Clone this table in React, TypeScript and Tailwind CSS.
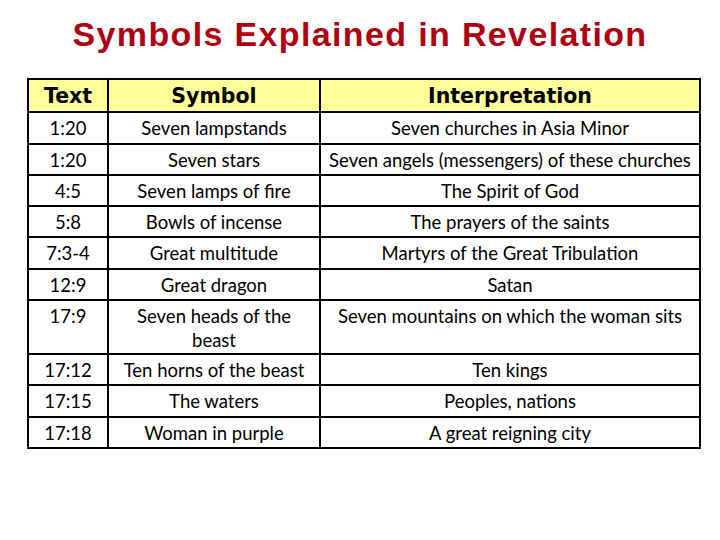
const rows: { ref: string; symbol: string; meaning: string; tall?: boolean; h: string }[] = [
  { ref: '1:20', symbol: 'Seven lampstands', meaning: 'Seven churches in Asia Minor', h: 'h-[32px]' },
  { ref: '1:20', symbol: 'Seven stars', meaning: 'Seven angels (messengers) of these churches', h: 'h-[31px]' },
  { ref: '4:5', symbol: 'Seven lamps of fire', meaning: 'The Spirit of God', h: 'h-[31px]' },
  { ref: '5:8', symbol: 'Bowls of incense', meaning: 'The prayers of the saints', h: 'h-[31px]' },
  { ref: '7:3-4', symbol: 'Great multitude', meaning: 'Martyrs of the Great Tribulation', h: 'h-[32px]' },
  { ref: '12:9', symbol: 'Great dragon', meaning: 'Satan', h: 'h-[31px]' },
  { ref: '17:9', symbol: 'Seven heads of the beast', meaning: 'Seven mountains on which the woman sits', h: 'h-[54px]', tall: true },
  { ref: '17:12', symbol: 'Ten horns of the beast', meaning: 'Ten kings', h: 'h-[31px]' },
  { ref: '17:15', symbol: 'The waters', meaning: 'Peoples, nations', h: 'h-[32px]' },
  { ref: '17:18', symbol: 'Woman in purple', meaning: 'A great reigning city', h: 'h-[31px]' },
]

const cell = 'border-2 border-black px-2 pt-[3px] align-top text-center'

export default function App() {
  return (
    <div className="h-[540px] w-[720px] bg-white font-['Lato',sans-serif] text-black">
      <h1 className="pt-[12px] text-center font-['Liberation_Sans',Arial,sans-serif] text-[34px] leading-[44px] font-bold tracking-[0.04em] text-[#b00010]">
        Symbols Explained in Revelation
      </h1>
      <table className="mt-[22px] ml-[27px] w-[674px] table-fixed border-collapse text-[18.5px] leading-[24px]">
        <colgroup>
          <col className="w-[80px]" />
          <col className="w-[212px]" />
          <col />
        </colgroup>
        <thead>
          <tr className="h-[33px] bg-[#ffff99]">
            {['Text', 'Symbol', 'Interpretation'].map((t) => (
              <th
                key={t}
                className="border-2 border-black px-1 align-middle font-['DejaVu_Sans',sans-serif] text-[20.5px] font-bold"
              >
                {t}
              </th>
            ))}
          </tr>
        </thead>
        <tbody>
          {rows.map((r, i) => (
            <tr key={i} className={r.h}>
              <td className={cell}>{r.ref}</td>
              <td className={`${cell} ${r.tall ? 'px-6' : ''}`}>{r.symbol}</td>
              <td className={cell}>{r.meaning}</td>
            </tr>
          ))}
        </tbody>
      </table>
    </div>
  )
}
